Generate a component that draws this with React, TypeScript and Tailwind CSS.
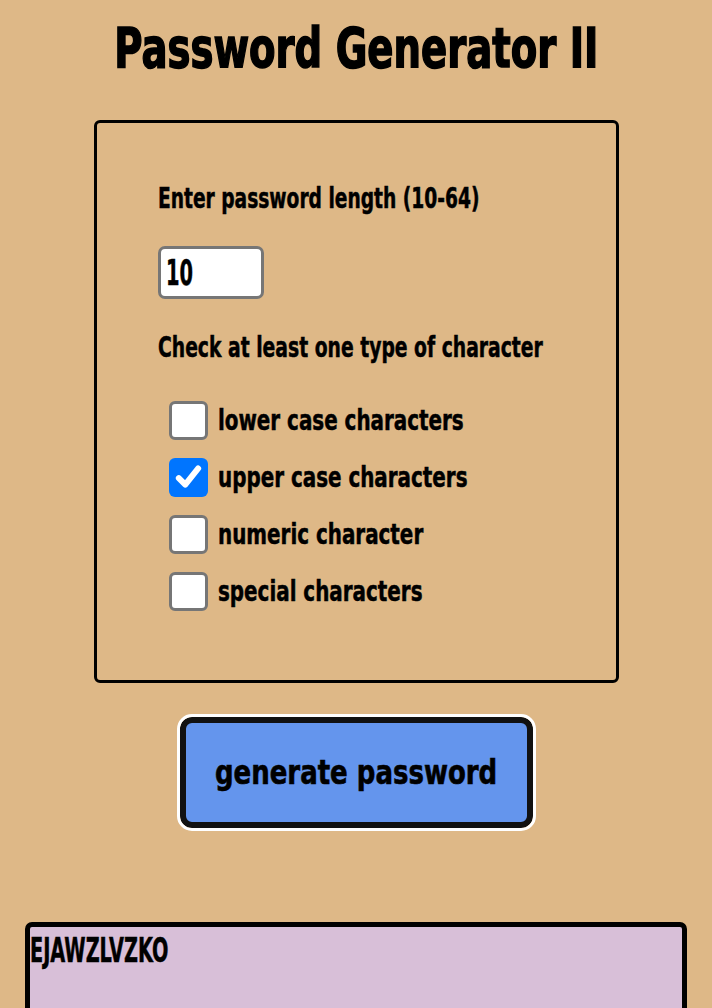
import { useState } from 'react';

const font = { fontFamily: '"DejaVu Sans Condensed", "DejaVu Sans", sans-serif' };

const options = [
  { id: 'lower', label: 'lower case characters', checked: false },
  { id: 'upper', label: 'upper case characters', checked: true },
  { id: 'numeric', label: 'numeric character', checked: false },
  { id: 'special', label: 'special characters', checked: false },
];

function Box({ checked }: { checked: boolean }) {
  if (checked) {
    return (
      <span className="flex h-[39px] w-[39px] shrink-0 items-center justify-center rounded-[6px] bg-[#0075ff]">
        <svg viewBox="0 0 24 24" className="h-[31px] w-[31px]" fill="none" stroke="white" strokeWidth="4.6" strokeLinecap="round" strokeLinejoin="round">
          <path d="M4.5 12.5l5 5L19.5 5" />
        </svg>
      </span>
    );
  }
  return <span className="block h-[39px] w-[39px] shrink-0 rounded-[6px] border-[3px] border-[#767676] bg-white" />;
}

export default function App() {
  const [opts] = useState(options);

  return (
    <div className="min-h-[1008px] overflow-hidden bg-[#deb887] text-black" style={font}>
      <h1 className="pt-[18px] text-center text-[55px] font-bold leading-[60px] [-webkit-text-stroke:1.5px_black]">
        <span className="inline-block scale-x-[0.78] whitespace-nowrap">Password Generator II</span>
      </h1>

      <div className="mx-auto mt-[42px] h-[563px] w-[525px] rounded-[6px] border-[3px] border-black pl-[61px] pt-[62px] [-webkit-text-stroke:0.5px_black]">
        <p className="text-[28px] font-bold leading-[28px]">
          <span className="inline-block origin-left scale-x-[0.74] whitespace-nowrap">Enter password length (10-64)</span>
        </p>
        <div className="mt-[33px] flex h-[53px] w-[106px] items-center rounded-[7px] border-[3px] border-[#767676] bg-white pl-[5px] text-[36px] font-bold leading-[40px]">
          <span className="inline-block origin-left scale-x-[0.6]">10</span>
        </div>
        <p className="mt-[35px] text-[28px] font-bold leading-[28px]">
          <span className="inline-block origin-left scale-x-[0.745] whitespace-nowrap">Check at least one type of character</span>
        </p>
        <div className="mt-[39px] flex flex-col gap-[18px] pl-[11px]">
          {opts.map((o) => (
            <label key={o.id} className="flex items-center gap-[10px] text-[28px] font-bold leading-[39px]">
              <Box checked={o.checked} />
              <span className="inline-block origin-left scale-x-[0.79] whitespace-nowrap">{o.label}</span>
            </label>
          ))}
        </div>
      </div>

      <div className="mt-[34px] flex justify-center">
        <button className="h-[111px] w-[353px] rounded-[12px] border-[6px] border-[#111] bg-[#6495ed] text-[34px] font-bold outline-[3px] outline-white [-webkit-text-stroke:0.6px_black]">
          <span className="inline-block scale-x-[0.85] whitespace-nowrap">generate password</span>
        </button>
      </div>

      <div className="mx-[25px] mt-[94px] h-[120px] rounded-[7px] border-[5px] border-black bg-[#d8bfd8] pt-[6px] text-[33px] font-bold leading-[36px] [-webkit-text-stroke:0.5px_black]">
        <span className="inline-block origin-left scale-x-[0.65] whitespace-nowrap">EJAWZLVZKO</span>
      </div>
    </div>
  );
}
